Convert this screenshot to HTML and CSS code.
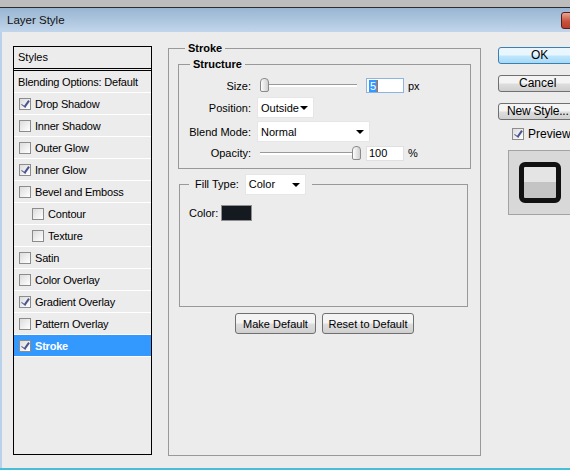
FILE: index.html
```html
<!DOCTYPE html>
<html lang="en">
<head>
    <meta charset="UTF-8">
    <title>Layer Style</title>
    <link rel="stylesheet" href="styles.css">
</head>
<body>
    <div class="topstrip"></div>
    <div class="titlebar">
        <span class="title">Layer Style</span>
        <span class="close"></span>
    </div>
    <div class="dialog">
        <div class="styles">
            <div class="style-head">Styles</div>
            <div class="style-row blend">Blending Options: Default</div>
            <div class="style-row"><span class="check on"></span>Drop Shadow</div>
            <div class="style-row"><span class="check"></span>Inner Shadow</div>
            <div class="style-row"><span class="check"></span>Outer Glow</div>
            <div class="style-row"><span class="check on"></span>Inner Glow</div>
            <div class="style-row"><span class="check"></span>Bevel and Emboss</div>
            <div class="style-row sub"><span class="check"></span>Contour</div>
            <div class="style-row sub"><span class="check"></span>Texture</div>
            <div class="style-row"><span class="check"></span>Satin</div>
            <div class="style-row"><span class="check"></span>Color Overlay</div>
            <div class="style-row"><span class="check on"></span>Gradient Overlay</div>
            <div class="style-row"><span class="check"></span>Pattern Overlay</div>
            <div class="style-row selected"><span class="check on"></span>Stroke</div>
        </div>

        <fieldset class="stroke">
            <legend>Stroke</legend>
            <fieldset class="structure">
                <legend>Structure</legend>
                <div class="grid">
                    <label>Size:</label>
                    <div class="slider-row">
                        <div class="slider"><span class="thumb thumb-left"></span></div>
                        <div class="num focused"><span class="sel">5</span><span class="caret"></span></div>
                        <span class="unit">px</span>
                    </div>
                    <label>Position:</label>
                    <div class="select pos">Outside<span class="arrow"></span></div>
                    <label>Blend Mode:</label>
                    <div class="select mode">Normal<span class="arrow"></span></div>
                    <label>Opacity:</label>
                    <div class="slider-row">
                        <div class="slider"><span class="thumb thumb-right"></span></div>
                        <div class="num">100</div>
                        <span class="unit">%</span>
                    </div>
                </div>
            </fieldset>
            <fieldset class="fill">
                <legend><span>Fill Type:</span><div class="select filltype">Color<span class="arrow"></span></div></legend>
                <div class="fill-body">
                    <div class="color-row">Color: <span class="swatch"></span></div>
                </div>
            </fieldset>
            <div class="actions">
                <button class="btn make">Make Default</button>
                <button class="btn reset">Reset to Default</button>
            </div>
        </fieldset>

        <div class="side">
            <button class="btn side-btn ok">OK</button>
            <button class="btn side-btn">Cancel</button>
            <button class="btn side-btn newstyle">New Style...</button>
            <div class="preview-check"><span class="check on"></span>Preview</div>
            <div class="preview">
                <div class="preview-square"></div>
            </div>
        </div>
    </div>
    <div class="bottomline"></div>
</body>
</html>
```

FILE: styles.css
```css
body {
    margin: 0;
    width: 570px;
    height: 470px;
    overflow: hidden;
    font-family: "Liberation Sans", Arial, sans-serif;
    font-size: 11px;
    color: #000;
    background: #ececec;
}
.topstrip {
    height: 7px;
    background: #bdbdbd;
    border-bottom: 1px solid #2e2e2e;
}
.titlebar {
    height: 24px;
    display: flex;
    align-items: center;
    justify-content: space-between;
    background: linear-gradient(#98b5d2, #c1d6eb);
}
.title {
    margin-left: 7px;
    font-size: 11.5px;
    color: #111;
}
.close {
    width: 20px;
    height: 15px;
    margin-top: 1px;
    margin-right: -13px;
    border: 1px solid #5a1f1a;
    border-radius: 3px 0 0 3px;
    background: linear-gradient(#e9a594, #c8523c 55%, #b8402b);
}
.dialog {
    display: flex;
    align-items: flex-start;
    height: 436px;
    border-left: 2px solid #b9d1ea;
    padding-left: 11px;
}
.dialog > * {
    flex: none;
}
.bottomline {
    height: 2px;
    background: #48bfd8;
}

/* styles list */
.styles {
    width: 137px;
    height: 407px;
    margin-top: 14px;
    border: 1px solid #000;
}
.style-head {
    height: 21px;
    line-height: 21px;
    padding-left: 4px;
    border-bottom: 3px double #000;
}
.style-row {
    display: flex;
    align-items: center;
    height: 21px;
    padding-left: 5px;
    border-bottom: 1px solid #fff;
    letter-spacing: -0.2px;
}
.style-row.blend {
    padding-left: 4px;
}
.style-row.sub {
    padding-left: 18px;
}
.style-row.selected {
    background: #3399ff;
    color: #fff;
    font-weight: bold;
}
.check {
    width: 10px;
    height: 10px;
    margin-right: 4px;
    border: 1px solid #8c8c8c;
    background: linear-gradient(135deg, #dcdcdc, #ffffff);
    position: relative;
    flex: none;
}
.check.on::after {
    content: "";
    position: absolute;
    left: 3px;
    top: 0;
    width: 3px;
    height: 7px;
    border-right: 2px solid #4a5590;
    border-bottom: 1px solid #4a5590;
    transform: rotate(35deg);
}

/* stroke panel */
fieldset {
    margin: 0;
    min-width: 0;
    border: 1px solid #999;
    box-sizing: border-box;
}
legend {
    font-weight: bold;
    line-height: 13px;
}
.stroke {
    width: 313px;
    height: 414px;
    margin: 10px 0 0 16px;
    padding: 3px 9px 0;
}
.stroke > legend {
    margin-left: 7px;
    padding: 0 3px;
}
.structure {
    padding: 6px 0 7px;
}
.structure > legend {
    margin-left: 11px;
    padding: 0 3px;
}
.grid {
    display: grid;
    grid-template-columns: 72px auto;
    grid-template-rows: 17px 21px 21px 16px;
    column-gap: 6px;
    row-gap: 3px;
    align-items: center;
}
.grid label {
    text-align: right;
}
.slider-row {
    display: flex;
    align-items: center;
}
.slider {
    position: relative;
    width: 97px;
    height: 2px;
    margin-left: 3px;
    border-top: 1px solid #9a9a9a;
    background: #fff;
}
.thumb {
    position: absolute;
    top: -7px;
    width: 7px;
    height: 12px;
    border: 1px solid #8a8a8a;
    border-radius: 4px 4px 2px 2px;
    background: linear-gradient(90deg, #fdfdfd, #d0d0d0);
}
.thumb-left {
    left: 0;
}
.thumb-right {
    right: -4px;
}
.num {
    width: 34px;
    height: 13px;
    margin-left: 9px;
    padding-left: 2px;
    line-height: 13px;
    background: #fff;
    border: 1px solid #e0e0e0;
    display: flex;
    align-items: center;
}
.num.focused {
    border-color: #8cb4de;
}
.sel {
    background: #3399ff;
    color: #fff;
    padding: 0 1px;
    line-height: 12px;
}
.caret {
    width: 1px;
    height: 12px;
    background: #d06a1a;
}
.unit {
    margin-left: 4px;
}
.select {
    display: flex;
    align-items: center;
    justify-content: space-between;
    height: 21px;
    padding: 0 5px 0 3px;
    background: #fff;
    border: 1px solid #e6e6e6;
    box-sizing: border-box;
    font-weight: normal;
}
.arrow {
    width: 0;
    height: 0;
    border-left: 4px solid transparent;
    border-right: 4px solid transparent;
    border-top: 4px solid #000;
}
.select.pos {
    width: 57px;
}
.select.mode {
    width: 113px;
}

.fill {
    margin: 5px 3px 0 1px;
    padding: 10px 9px 0;
}
.fill > legend {
    display: flex;
    align-items: center;
    margin-left: 0;
    padding: 0 6px;
    font-weight: normal;
}
.select.filltype {
    width: 61px;
    height: 21px;
    margin-left: 6px;
}
.fill-body {
    height: 101px;
}
.color-row {
    display: flex;
    align-items: center;
    gap: 3px;
}
.swatch {
    width: 29px;
    height: 14px;
    background: #141a1f;
    border: 1px solid #8f8f8f;
}
.actions {
    display: flex;
    justify-content: center;
    gap: 6px;
    margin-top: 6px;
}

/* buttons */
.btn {
    height: 21px;
    padding: 0;
    font-family: inherit;
    font-size: 11px;
    color: #000;
    border: 1px solid #707070;
    border-radius: 3px;
    background: linear-gradient(#f4f4f4 45%, #dddddd 55%, #cfcfcf);
}
.btn.make {
    width: 81px;
}
.btn.reset {
    width: 92px;
}
.side {
    display: flex;
    flex-direction: column;
    align-items: flex-start;
    margin: 15px 0 0 17px;
}
.side-btn {
    width: 76px;
    height: 17px;
    margin-bottom: 11px;
    font-size: 12px;
    line-height: 15px;
    text-align: left;
    padding-left: 12px;
    white-space: nowrap;
}
.side-btn.ok {
    border-color: #3c7fb1;
    background: linear-gradient(#eaf6fd 45%, #bee6fd 55%, #a7d9f5);
    padding-left: 32px;
}
.side-btn:nth-child(2) {
    padding-left: 20px;
}
.side-btn.newstyle {
    padding-left: 8px;
    letter-spacing: -0.2px;
}
.preview-check {
    display: flex;
    align-items: center;
    margin: -4px 0 0 14px;
    font-size: 12px;
}
.preview-check .check {
    margin-right: 4px;
}
.preview {
    width: 62px;
    height: 63px;
    margin: 9px 0 0 10px;
    border: 1px solid #a3a3a3;
    background: #d8d8d8;
    display: flex;
    align-items: center;
    justify-content: center;
}
.preview-square {
    width: 32px;
    height: 31px;
    border: 5px solid #111;
    border-radius: 6px;
    background: linear-gradient(#e4e4e4 50%, #c4c4c4 50%);
}
```
